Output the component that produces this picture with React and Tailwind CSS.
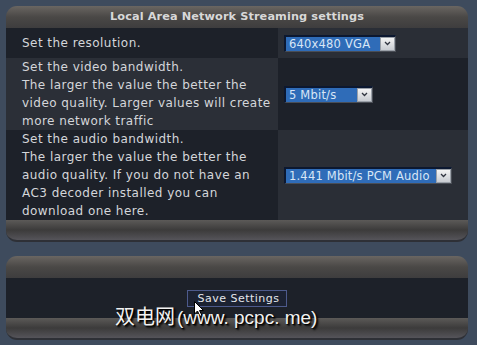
import React from "react";

function Select({ label, width }) {
  return (
    <div
      className="flex h-[17px] items-stretch bg-[#2f6cb8] border-t-2 border-l-2 border-t-[#0c1830] border-l-[#0c1830] border-b border-r border-b-[#4a4e56] border-r-[#4a4e56]"
      style={{ width }}
    >
      <span className="flex-1 min-w-0 overflow-hidden pl-[3px] text-[11.5px] leading-[15px] tracking-[0.2px] text-[#d8e6f6] whitespace-nowrap">{label}</span>
      <span className="flex w-[15px] shrink-0 items-center justify-center bg-gradient-to-b from-[#f4f4f4] to-[#c8ccd2] border border-[#9aa0a8]">
        <svg width="7" height="5" viewBox="0 0 7 5">
          <path d="M1 1 L3.5 3.5 L6 1" stroke="#303540" strokeWidth="1.3" fill="none" />
        </svg>
      </span>
    </div>
  );
}

function TopBar({ children }) {
  return (
    <div className="h-[22px] rounded-t-[11px] bg-gradient-to-b from-[#6a6662] via-[#4a4846] to-[#3e3d3e] flex items-center justify-center">
      {children}
    </div>
  );
}

function BottomBar() {
  return (
    <div className="h-[22px] rounded-b-[11px] bg-gradient-to-b from-[#5c5a58] via-[#3c3b3b] to-[#55545a] border-b-2 border-[#2e3036]" />
  );
}

export default function App() {
  const cell = "text-[12px] leading-[18px] tracking-[0.45px] text-[#d4d6da] pl-[16px] flex items-center";
  return (
    <div
      className="relative w-[477px] h-[345px] overflow-hidden bg-[#3e4b5d] pt-[6px] pl-[6px]"
      style={{ fontFamily: '"DejaVu Sans", Verdana, sans-serif' }}
    >
      <div className="w-[462px]">
        <TopBar>
          <span className="text-[11.3px] font-bold text-[#d8d8d8] tracking-[0.1px]">
            Local Area Network Streaming settings
          </span>
        </TopBar>
        <div className="grid grid-cols-[272px_190px]">
          <div className={`${cell} h-[30px] bg-[#1d2129]`}>Set the resolution.</div>
          <div className="h-[30px] bg-[#2a2e36] flex items-center pl-[6px]">
            <Select label="640x480 VGA" width={112} />
          </div>

          <div className={`${cell} h-[72px] bg-[#2b2f37]`}>
            <div>
              Set the video bandwidth.
              <br />
              The larger the value the better the
              <br />
              video quality. Larger values will create
              <br />
              more network traffic
            </div>
          </div>
          <div className="h-[72px] bg-[#1d2129] flex items-center pl-[6px]">
            <Select label="5 Mbit/s" width={89} />
          </div>

          <div className={`${cell} h-[90px] bg-[#1d2129]`}>
            <div>
              Set the audio bandwidth.
              <br />
              The larger the value the better the
              <br />
              audio quality. If you do not have an
              <br />
              AC3 decoder installed you can
              <br />
              download one here.
            </div>
          </div>
          <div className="h-[90px] bg-[#2a2e36] flex items-center pl-[6px]">
            <Select label="1.441 Mbit/s PCM Audio" width={168} />
          </div>
        </div>
        <BottomBar />

        <div className="mt-[14px]">
          <TopBar />
          <div className="h-[40px] bg-[#1d2129] flex justify-center pt-[12px]">
            <button className="h-[17px] w-[100px] border border-[#4d5a8c] bg-[#1c2232] pl-[3px] text-[11px] leading-[14px] tracking-[0.5px] text-[#e4e6ea]">
              Save Settings
            </button>
          </div>
          <BottomBar />
        </div>
      </div>

      <svg className="absolute left-[194px] top-[301px]" width="11" height="17" viewBox="0 0 11 17">
        <path d="M0.5 0.5 L0.5 13 L3.5 10 L6 15.5 L8 14.5 L5.5 9.5 L9.5 9.5 Z" fill="#ffffff" stroke="#000000" strokeWidth="1" />
      </svg>

      <div
        className="absolute left-[115px] top-[305px] text-[20px] leading-[24px] text-[#f2f2f2] whitespace-nowrap"
        style={{ fontFamily: '"Liberation Sans", "Noto Sans CJK SC", sans-serif', textShadow: "1px 1px 1px #000, 2px 2px 2px #000" }}
      >
        双电网<span className="ml-[2px] text-[19px]">(www. pcpc. me)</span>
      </div>
    </div>
  );
}
